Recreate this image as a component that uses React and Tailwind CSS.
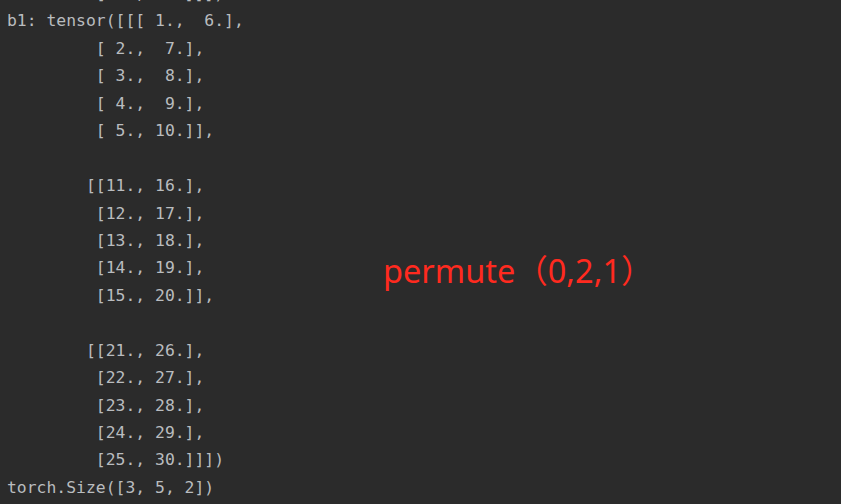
const lines = [
  '         [ 5., 10.]]])',
  'b1: tensor([[[ 1.,  6.],',
  '         [ 2.,  7.],',
  '         [ 3.,  8.],',
  '         [ 4.,  9.],',
  '         [ 5., 10.]],',
  '',
  '        [[11., 16.],',
  '         [12., 17.],',
  '         [13., 18.],',
  '         [14., 19.],',
  '         [15., 20.]],',
  '',
  '        [[21., 26.],',
  '         [22., 27.],',
  '         [23., 28.],',
  '         [24., 29.],',
  '         [25., 30.]]])',
  'torch.Size([3, 5, 2])',
];

export default function App() {
  return (
    <div className="relative w-[841px] h-[504px] overflow-hidden bg-[#2b2b2b]">
      {/* console output */}
      <div className="-mt-[20px] pl-[7px] flex flex-col text-[16.4px] leading-[27.45px] text-[#b9bcbf] whitespace-pre font-['DejaVu_Sans_Mono',monospace]">
        {lines.map((l, i) => (
          <div key={i} className="h-[27.45px]">{l}</div>
        ))}
      </div>

      {/* annotation */}
      <div className="absolute left-[383px] top-[249px] text-[32.5px] leading-[44px] text-[#ff2a1f] font-['Noto_Sans','Noto_Sans_CJK_SC',sans-serif]">
        permute（0,2,1）
      </div>
    </div>
  );
}
